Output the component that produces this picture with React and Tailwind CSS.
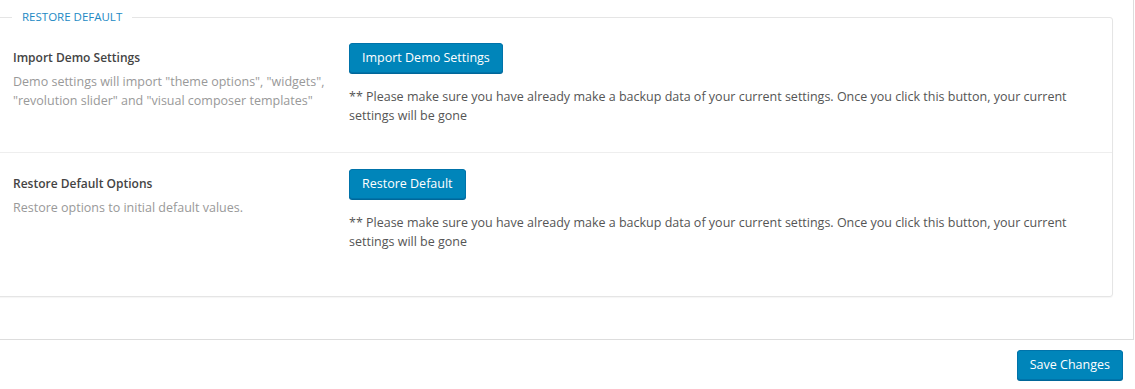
import React from "react";

const font = { fontFamily: '"Open Sans", "Liberation Sans", sans-serif' };

const rows = [
  {
    title: "Import Demo Settings",
    desc: 'Demo settings will import "theme options", "widgets", "revolution slider" and "visual composer templates"',
    button: "Import Demo Settings",
    pad: "pt-[17px] pb-[27px]",
  },
  {
    title: "Restore Default Options",
    desc: "Restore options to initial default values.",
    button: "Restore Default",
    pad: "pt-[16px] pb-[45px]",
  },
];

const Row = ({ item, last }) => (
  <div className={`flex ${item.pad} ${last ? "" : "border-b border-[#eeeeee]"}`}>
    <div className="w-[352px] shrink-0 pl-[16px] pr-[20px] pt-[6px]">
      <p className="text-[12px] leading-[18px] font-semibold text-[#444]">{item.title}</p>
      <p className="mt-[5px] text-[12.5px] leading-[19px] text-[#999]">{item.desc}</p>
    </div>
    <div className="flex-1 pr-[40px]">
      <button
        type="button"
        className="h-[30px] px-[12px] rounded-[3px] bg-[#0085ba] border border-[#0073aa] shadow-[0_1px_0_#006799] text-white text-[12.5px]"
      >
        {item.button}
      </button>
      <p className="mt-[14px] text-[12.5px] leading-[19px] text-[#555]">
        ** Please make sure you have already make a backup data of your current settings. Once you click this button, your current settings will be gone
      </p>
    </div>
  </div>
);

const App = () => {
  return (
    <div className="w-[1135px] h-[389px] bg-white overflow-hidden" style={font}>
      <div className="w-[1134px] h-[340px] border-r border-b border-[#dddddd] pr-[20px] pt-[8px]">
        <fieldset className="-ml-[4px] border border-[#e5e5e5] rounded-[3px] shadow-[0_1px_1px_rgba(0,0,0,0.04)]">
          <legend className="ml-[15px] px-[10px] text-[11.5px] leading-[18px] uppercase text-[#2289c4]">
            Restore Default
          </legend>
          {rows.map((item, i) => (
            <Row key={item.title} item={item} last={i === rows.length - 1} />
          ))}
        </fieldset>
      </div>
      <div className="flex justify-end pt-[10px] pr-[12px]">
        <button
          type="button"
          className="h-[30px] px-[12px] rounded-[3px] bg-[#0085ba] border border-[#0073aa] shadow-[0_1px_0_#006799] text-white text-[12.5px]"
        >
          Save Changes
        </button>
      </div>
    </div>
  );
};

export default App;
